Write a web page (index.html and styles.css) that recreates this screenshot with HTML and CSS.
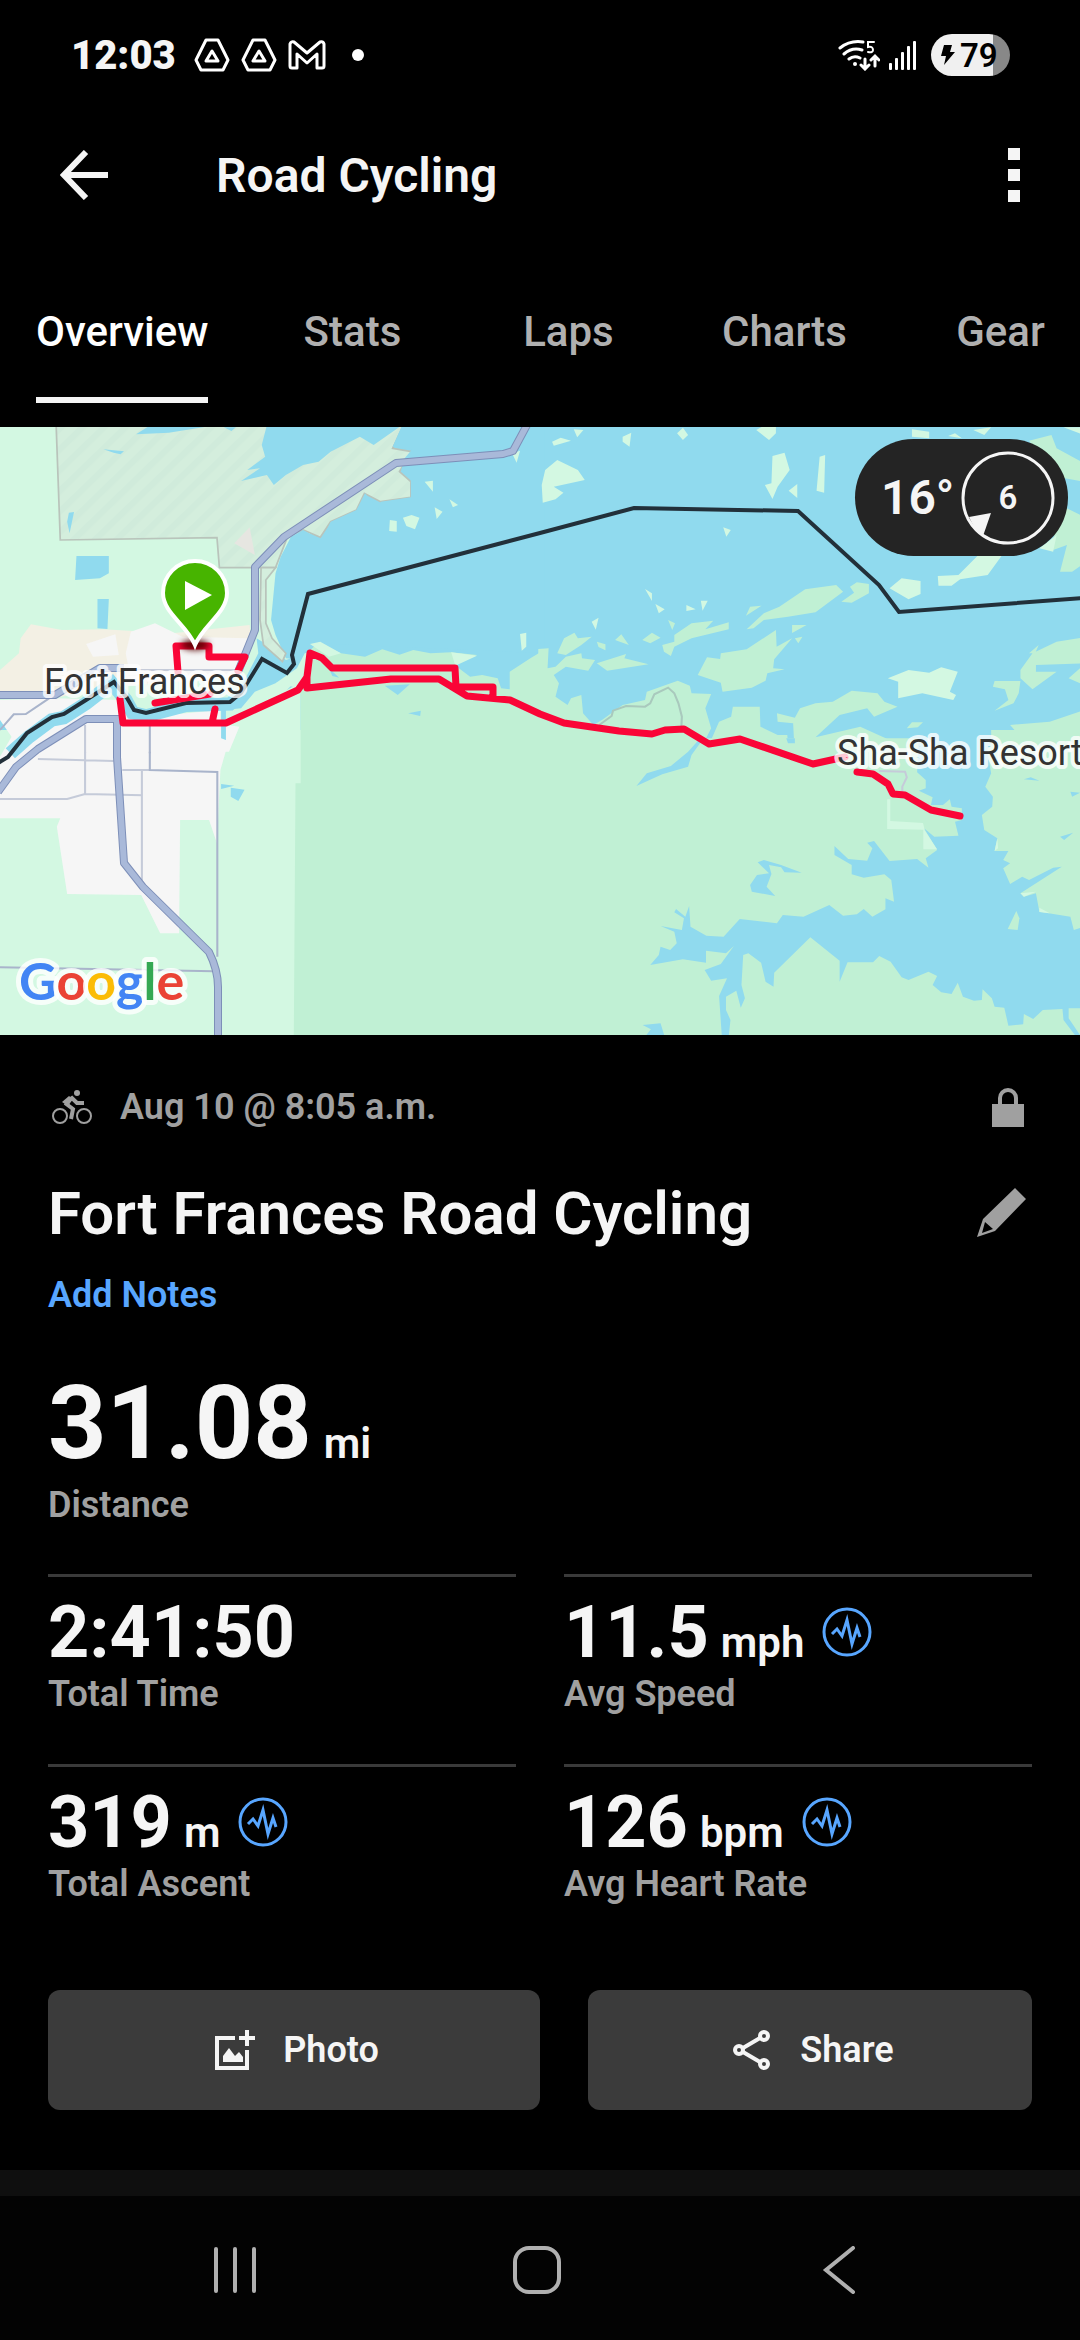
FILE: index.html
```
<!DOCTYPE html>
<html lang="en">

<head>
  <meta charset="utf-8">
  <meta name="viewport" content="width=device-width, initial-scale=1">
  <title>Road Cycling</title>
  <link rel="stylesheet" href="styles.css">
</head>

<body>
  <div class="status-bar">
    <div class="status-left">
      <span class="clock">12:03</span>
      <svg class="drive" width="36" height="34" viewBox="0 0 36 34" fill="none" stroke="#fff" stroke-width="3" stroke-linejoin="round">
        <path d="M12 2h12l10 20-5 10H7L2 22z" />
        <path d="M18 13l-6 10h12z" />
      </svg>
      <svg class="drive" width="36" height="34" viewBox="0 0 36 34" fill="none" stroke="#fff" stroke-width="3" stroke-linejoin="round">
        <path d="M12 2h12l10 20-5 10H7L2 22z" />
        <path d="M18 13l-6 10h12z" />
      </svg>
      <svg width="38" height="30" viewBox="0 0 38 30" fill="none" stroke="#fff" stroke-width="3" stroke-linejoin="round">
        <path d="M2 4q1-3 4-2l13 11L32 2q3-1 4 2v22q0 2-2 2h-5V14L19 23 9 14v14H4q-2 0-2-2z" />
      </svg>
      <span class="more-dot"></span>
    </div>
    <div class="status-right">
      <svg width="42" height="32" viewBox="0 0 42 32" fill="none" stroke="#fff" stroke-width="3" stroke-linecap="round">
        <path d="M2 9Q12 1 25 3M6 15q8-7 18-4M11 20q5-4 11-1" />
        <circle cx="17" cy="25" r="2" fill="#fff" stroke="none" />
        <path d="M36 3h-6v5q5-1 5 3 0 3-5 2" stroke-width="2" />
        <path d="M27 20v9M23 26l4 4 4-4M37 27v-9M33 21l4-4 4 4" stroke-width="3" />
      </svg>
      <svg width="28" height="30" viewBox="0 0 28 30" fill="#fff">
        <rect x="0" y="23" width="3" height="7" rx="1" />
        <rect x="6" y="18" width="3" height="12" rx="1" />
        <rect x="12" y="12" width="3" height="18" rx="1" />
        <rect x="18" y="6" width="3" height="24" rx="1" />
        <rect x="24" y="1" width="3" height="29" rx="1" />
      </svg>
      <span class="battery">
        <svg width="14" height="22" viewBox="0 0 14 22"><path d="M3 1h8L9 8h5L3 21l2-9H0z" /></svg>
        79
      </span>
    </div>
  </div>

  <header class="app-bar">
    <button class="icon-button" aria-label="Back">
      <svg width="48" height="50" viewBox="0 0 48 50" fill="none" stroke="#f5f5f5" stroke-width="6">
        <path d="M48 25H5M26 2L4 25l22 23" />
      </svg>
    </button>
    <h1>Road Cycling</h1>
    <button class="icon-button" aria-label="More options">
      <svg width="12" height="54" viewBox="0 0 12 54" fill="#f5f5f5">
        <rect width="12" height="12" />
        <rect y="21" width="12" height="12" />
        <rect y="42" width="12" height="12" />
      </svg>
    </button>
  </header>

  <nav class="tabs">
    <a class="tab active" href="#overview">Overview</a>
    <a class="tab" href="#stats">Stats</a>
    <a class="tab" href="#laps">Laps</a>
    <a class="tab" href="#charts">Charts</a>
    <a class="tab" href="#gear">Gear</a>
  </nav>

  <main>
    <div class="map">
      <svg class="map-canvas" viewBox="0 0 1080 608">
        <defs>
          <pattern id="hatch" width="44" height="44" patternUnits="userSpaceOnUse" patternTransform="rotate(45)">
            <rect width="44" height="44" fill="#d4eedd" />
            <rect width="18" height="44" fill="#d0ebdb" />
          </pattern>
          <filter id="soft" x="-50%" y="-100%" width="200%" height="300%">
            <feGaussianBlur stdDeviation="3" />
          </filter>
        </defs>
        <rect class="water" width="1080" height="608" />

        <!-- south west -->
        <g transform="translate(0 313) scale(.3444 .3333)">
          <path class="land" d="M0-30H900V900H0z" />
          <path class="park" d="M873-30H1580V900H853L858 130H873z" />
          <path class="town" d="M0-30H680L665 0 640 90 630 310 607 240H523L520 580H465L410 465 195 462 165 260 175 235H0z" />
          <path class="land" d="M0-30H45L0 50z" />
          <path class="water" d="M642 132l38 5-38 10zM670 143l40 6-18 34-22-13zM640-30h25L668 4 642 0z" />
          <g class="street">
            <path d="M110 57L330 63M247-30V162L415 166M0 177H195L247 162M355 90H435M412 90V420" />
            <path class="street-dark" d="M435-30V90L631 96V650M0 682L620 694" />
          </g>
        </g>

        <!-- north west -->
        <g transform="translate(0 -7) scale(.3444 .3333)">
          <path class="land" d="M0 20H900V740L660 990 0 860z" />
          <path class="reserve" d="M163 15L175 360 630 353 637 443H800L835 350 880 330 930 352 960 305 1035 270 1058 220 1105 245 1193 232V185L1160 155 1195 95 1140 85 1172 15z" />
          <path class="water" d="M775 15L760 75 770 110 718 150 755 145 700 183 775 165 795 195 830 165 880 135 925 125 960 95 1045 50 1085 75 1168 15z" />
          <path class="water" d="M1168 15L1140 80 1195 90 1175 115 1165 150 1193 180V232L1105 245 1098 270 1060 220 1035 270 960 305 935 360 880 330 845 350 815 410 800 460 787 600 800 645 830 715 880 720 925 670 1580 700V15z" />
          <path class="water" d="M745 655L800 690 830 720 890 700 870 760 800 790 740 815 700 865 650 870 680 830 715 770 750 700z" />
          <path class="land" d="M862 745L885 700 915 690 910 820 873 820 873 990 660 990 700 915 740 860 850 800 800 790z" />
          <path class="park" d="M873 990V815L890 700 925 668 990 700 1060 710 1110 688 1160 704 1200 690 1250 700 1310 697 1385 705 1320 735 1365 770 1400 765 1445 775 1455 805 1480 808 1480 755 1540 715 1580 690V990z" />
          <path class="land" d="M900 672L930 665 990 700 955 710zM1310 697L1385 707 1322 737z" />
          <path class="sand" d="M90 613L180 630 300 628 500 640 725 615 730 690 600 780 300 800 160 835 0 835V750L55 700 60 655zM120 840L250 840 60 960z" />
          <path class="town" d="M250 672L335 643 345 705 270 710zM380 635L450 610 530 650 720 655 700 770 380 780 365 700zM0 840L160 835 350 840 430 890 640 870 640 912 695 920 665 995H15L40 960 0 900z" />
          <path class="water" d="M222 408H316V460L290 475 218 480zM283 537H316L312 627 283 625zM200 278L215 276 202 340 195 305zM300 88L360 94 350 103 330 98zM395 43L430 20H600L490 38zM650 22H685L672 33zM1117 797L1190 793 1155 825zM1185 880L1222 872 1220 888zM642 870H656V960L642 955zM955 745L985 773 965 768z" />
          <path fill="#e6e6e1" d="M680 370L725 322 740 405z" />
          <path class="reserve" d="M800 443L772 480V610L790 655 830 700 820 725 765 675 755 600 758 443z" />
          <path class="land" d="M1233 185l24-3v33zM1305 238l25 17-15 7zM1262 262l23 13-17 22zM1170 293l25-8 23 8-13 35-25-10zM1132 300l20 3v32l-22-2zM1487 100l23-8-10 36zM1510 642l18-4v42l-13 12z" />
          <path class="river" d="M700 825L668 852 540 856 425 888 385 878 365 840 325 790 250 850 185 893 150 900 85 950 30 1000" />
          <g class="street">
            <path d="M380 750H690M247 915V1000" />
            <path class="street-dark" d="M0 930L40 883 75 882 150 830M435 915V1000" />
          </g>
        </g>

        <!-- north east -->
        <g transform="translate(540 -7) scale(.3444 .3333)">
          <path class="park" d="M-5 687L25 685 22 745 45 740 75 710 120 700 122 715 160 720 140 752 75 740 40 765 55 790 45 830 80 855 90 835 120 825 125 880 155 915 180 900 240 855 305 840 310 815 400 782 435 797 440 820 497 822 480 865 497 925 460 1000H-5z" />
          <path class="park" d="M480 1000L520 905 555 890 560 860H638L640 920 690 945H718L720 968 738 970 735 910 690 905 688 880 740 893 755 865 800 850 850 845 905 812 980 820 1000 845 1038 860 970 890 950 865 870 885 800 952 930 920 1100 1000z" />
          <path class="park" d="M1290 1000L1320 962 1395 950 1365 915 1480 905 1580 870V1000zM1065 925l15-18h32l-15 15zM50 700L70 655 100 638 110 655 150 650 120 675 75 705zM165 730L250 702 245 715 315 733 195 752zM165 665l25 8v18l-20-10zM218 660l18-17 22 32zM297 660l28-22 25 15-30 17zM355 675L390 665 390 645 440 610 503 602 480 628 548 607V628L440 655 390 680 380 708 360 695zM372 600l20 10-8 20zM600 628L650 580 695 560 770 508 860 495 880 515 800 577 720 590 650 600 620 625z" />
          <path class="park" d="M458 765L485 712 523 717 525 700 600 688 685 630 687 680 732 655 680 718 677 745 710 748 660 760 655 782 615 803 530 815 525 788zM875 545L912 518 900 500 920 487 955 492V520L905 548zM598 587L610 560 643 557zM732 615h42l-42 24zM740 655l22-5-12 20zM1395 750L1430 700 1500 665 1580 652V730L1440 735V755H1500L1430 808 1395 775zM1320 783H1395L1390 820 1375 850 1320 872 1360 840 1350 808 1315 800zM1535 775L1568 745V790zM1420 700l28-25-10 24zM1420 62L1485 45 1500 85 1580 130V185L1500 170zM1500 250L1580 290V430L1545 455H1510L1530 375 1490 390z" />
          <path class="land" d="M5 195L15 150 50 120 110 150 130 180 40 200 68 218 45 238 8 248zM35 65L60 53 90 62 40 77zM98 28l28 2-18 22zM240 50l25-12-5 42-20-15zM398 40l17-17 15 22-15 15zM628 30L645 20H685L685 40 665 60zM675 108L710 98 725 150 690 200 675 237 653 195 672 190zM722 212l25-20v42zM812 110L828 105 825 218 803 212zM532 322l22 8-13 20zM305 507L325 520V543zM335 552L362 568 345 580zM425 555L452 568 425 573zM467 542H487L472 572zM150 605l20-12-8 36zM1015 505L1050 475 1105 483V522L1070 538zM1155 468L1215 465 1270 408H1340L1300 465 1220 478 1195 497H1157zM1010 775L1070 750 1130 758 1165 742 1213 755 1190 815 1208 825 1200 840 1110 820 1040 835V785zM1080 28L1130 35 1130 55 1080 50zM1258 30L1310 22 1290 45zM1185 48l20-8 20 15zM1520 22H1580V45zM1450 385L1500 345 1490 395z" />
          <path class="street trail" d="M172 915L208 888 212 872 250 858 305 860 320 850 332 823 372 803 390 820 402 850 412 890 410 930" />
        </g>

        <!-- south east -->
        <g transform="translate(540 313) scale(.3444 .3333)">
          <path class="park" d="M-2 30H1580V900H-2z" />
          <path class="park" d="M-2-5H1100V40H-2zM1310-30H1580V40H1310z" />
          <path class="water" d="M475-5L440 45 430 80 355 103 280 138 310 100 380 78 430 35 465-5zM1100-20L1095 97 1120 120V145L1100 152 1140 172 1135 195H1170L1190 178 1195 200 1225 205V240L1205 245 1215 287 1145 290 1115 265 1153 330 1120 355 1128 383 1095 357 1015 363 970 303 950 308 965 325 950 362 895 357 855 318V345L905 375V403L940 413 1000 403 1020 420 1028 485 1003 475V508L965 530 940 507 920 523 880 527 840 495 765 530 705 525 688 550 580 537 533 590 483 587 437 560 433 498 422 530 395 507 390 517 418 535 412 570 350 558 390 575 397 610 378 630 350 620 345 645 320 675 415 658 482 668V632L540 640 563 618 525 672 478 690 497 722 543 715 520 768 528 890H548L553 840 540 810V770L570 752 583 803 595 775 585 735 590 645 605 640 642 668 655 725 678 740 680 698 785 592 870 662V725L893 667H967L985 648 1018 665 1050 712 1070 720 1128 695 1153 708 1140 735 1165 757 1195 762 1213 728 1228 770 1260 782 1283 780 1285 748 1312 775 1320 800 1348 803 1360 857 1403 853 1405 822 1432 837 1460 810 1517 807 1520 840 1553 885H1568L1535 835V805H1580V560L1550 570 1540 530 1450 515 1440 460 1405 470 1395 460 1515 380 1490 383 1420 420 1400 410 1365 432 1345 385 1365 370 1345 360 1360 333H1320L1328 295 1290 270 1283 225 1313 200 1315 170 1293 140 1310 100 1290-20z" />
          <path class="water" d="M632 367L650 360 700 375 760 398 710 397 700 382 665 375 672 402 658 440 683 468 615 455 610 435 630 405 665 400zM298 855L350 850 362 890H305L322 868zM1405 118L1425 112 1450 122zM1540 155L1568 158 1545 170zM1510 290L1548 278 1522 300zM715-5h25v15h-20z" />
          <path class="park" d="M1358 567L1383 513 1392 535 1387 570z" />
          <path class="land" d="M1008 178h9v65l95 6 5 20-109-2zM1113 265L1153 328H1113zM1395 460L1440 455 1405 470zM1450 503L1480 520 1450 516zM1328 295L1330 325 1320 333z" />
          <path class="street" d="M985 93L1060 95 1065 112 1052 140V160" />
        </g>

        <!-- highways, drawn twice for the outline -->
        <g class="highway-edge">
          <path d="M527-2L513 24 503 27 396 36 284 110 255 140V203L238 245M0 268H55L100 241H124M-2 365L16 340 38 322 86 292H120M117 292V330L124 436 143 460 209 525Q218 543 218 560V610" />
        </g>
        <g class="highway">
          <path d="M527-2L513 24 503 27 396 36 284 110 255 140V203L238 245M0 268H55L100 241H124M-2 365L16 340 38 322 86 292H120M117 292V330L124 436 143 460 209 525Q218 543 218 560V610" />
        </g>

        <path class="border" d="M-2 336L8 330 27 306 52 290 64 287 86 273 114 255 127 271 134 283 146 286 186 276 230 275 241 266 262 232 287 246 294 237 292 228 308 167 540 106 634 81 798 84 879 158 899 185 1082 171" />

        <g class="route">
          <path d="M178 245L176 219H209V230H245L238 244M155 276L210 267M120 272L123 296H226L298 263 307 250 310 226 322 231 332 241H455L456 260H493V271M307 250V261L391 252H439L467 269 510 273 540 287 564 296 619 304 652 307 665 303 684 302 709 317 740 312 813 337 845 330M857 345L873 347 888 357 893 367 905 368 931 383 960 389M212 296L215 282" />
        </g>

        <ellipse cx="195" cy="218" rx="14" ry="5" fill="#500" filter="url(#soft)" />
        <path d="M195 218C187 198 163 186 163 166a32 32 0 0 1 64 0C227 186 203 198 195 218z" fill="#47b400" stroke="#fff" stroke-width="4" />
        <path d="M185 154v29l27-15z" fill="#fff" />

        <text class="place" x="44" y="267">Fort Frances</text>
        <text class="place" x="837" y="338">Sha-Sha Resort</text>
        <text class="logo" x="19" y="573"><tspan fill="#4285f4">G</tspan><tspan fill="#ea4335">o</tspan><tspan fill="#fbbc05">o</tspan><tspan fill="#4285f4">g</tspan><tspan fill="#34a853">l</tspan><tspan fill="#ea4335">e</tspan></text>
      </svg>

      <div class="weather">
        <span class="temp">16°</span>
        <span class="wind">
          <svg class="wind-ring" width="96" height="96" viewBox="0 0 96 96">
            <circle cx="48" cy="48" r="45" fill="none" stroke="#f5f5f5" stroke-width="3" />
            <path d="M9 67l22-4-8 23q-9-7-14-19z" fill="#f5f5f5" />
          </svg>
          6
        </span>
      </div>
    </div>

    <section class="summary">
      <div class="row meta">
        <svg width="42" height="38" viewBox="0 0 42 38" fill="none" stroke="#a0a0a0" stroke-width="2">
          <circle cx="9" cy="28" r="7" />
          <circle cx="33" cy="28" r="7" />
          <circle cx="26" cy="5" r="3" fill="#a0a0a0" stroke="none" />
          <path d="M14 15l7-5 5 5h7M14 15l8 6-2 10" stroke-width="4" />
          <path d="M11 14l7-6 4 3-5 7z" fill="#a0a0a0" stroke="none" />
        </svg>
        <span class="date">Aug 10 @ 8:05 a.m.</span>
        <svg class="end" width="32" height="40" viewBox="0 0 32 40">
          <rect y="17" width="32" height="23" fill="#a0a0a0" />
          <path d="M8 18V11a8 8 0 0 1 16 0v7" fill="none" stroke="#a0a0a0" stroke-width="4" />
        </svg>
      </div>
      <div class="row title-row">
        <h2>Fort Frances Road Cycling</h2>
        <button class="icon-button end" aria-label="Edit name">
          <svg width="50" height="50" viewBox="0 0 50 50" fill="#a0a0a0">
            <path fill-rule="evenodd" d="M38 0L49 11 18 43 0 49 6 31zM8 34L5 45 16 41z" />
          </svg>
        </button>
      </div>
      <a class="notes" href="#notes">Add Notes</a>

      <div class="distance">
        <div class="figure"><span class="value">31.08</span><span class="unit">mi</span></div>
        <div class="label">Distance</div>
      </div>

      <div class="stats">
        <div class="stat">
          <div class="figure"><span class="value">2:41:50</span></div>
          <div class="label">Total Time</div>
        </div>
        <div class="stat">
          <div class="figure">
            <span class="value">11.5</span><span class="unit">mph</span>
            <svg class="pulse" viewBox="0 0 50 50"><circle cx="25" cy="25" r="23" /><path d="M10 27l5-5 5 7 5-16 5 24 5-16 3 9" /></svg>
          </div>
          <div class="label">Avg Speed</div>
        </div>
        <div class="stat">
          <div class="figure">
            <span class="value">319</span><span class="unit">m</span>
            <svg class="pulse" viewBox="0 0 50 50"><circle cx="25" cy="25" r="23" /><path d="M10 27l5-5 5 7 5-16 5 24 5-16 3 9" /></svg>
          </div>
          <div class="label">Total Ascent</div>
        </div>
        <div class="stat">
          <div class="figure">
            <span class="value">126</span><span class="unit">bpm</span>
            <svg class="pulse" viewBox="0 0 50 50"><circle cx="25" cy="25" r="23" /><path d="M10 27l5-5 5 7 5-16 5 24 5-16 3 9" /></svg>
          </div>
          <div class="label">Avg Heart Rate</div>
        </div>
      </div>

      <div class="actions">
        <button class="action">
          <svg width="40" height="40" viewBox="0 0 40 40" fill="none" stroke="#f5f5f5" stroke-width="4">
            <path d="M20 8H2v30h30V20M32 0v16M24 8h16" />
            <path d="M8 32V26l6-8 6 8 4-4 4 5v5z" fill="#f5f5f5" stroke="none" />
          </svg>
          Photo
        </button>
        <button class="action">
          <svg width="40" height="40" viewBox="0 0 40 40" fill="none" stroke="#f5f5f5" stroke-width="4">
            <path d="M11 18L28 8M11 22l17 10" />
            <circle cx="7" cy="20" r="4" />
            <circle cx="32" cy="6" r="4" />
            <circle cx="32" cy="34" r="4" />
          </svg>
          Share
        </button>
      </div>
    </section>
    <div class="separator"></div>
  </main>

  <footer class="nav-bar">
    <button class="icon-button" aria-label="Recent apps">
      <svg width="48" height="48" viewBox="0 0 48 48" stroke="#b0b0b0" stroke-width="4" stroke-linecap="round">
        <path d="M5 3v42M24 3v42M43 3v42" />
      </svg>
    </button>
    <button class="icon-button" aria-label="Home">
      <svg width="48" height="48" viewBox="0 0 48 48" fill="none" stroke="#b0b0b0" stroke-width="4">
        <rect x="2" y="2" width="44" height="44" rx="14" />
      </svg>
    </button>
    <button class="icon-button" aria-label="Back">
      <svg width="48" height="48" viewBox="0 0 48 48" fill="none" stroke="#b0b0b0" stroke-width="4" stroke-linecap="round">
        <path d="M38 2L11 24l27 22" />
      </svg>
    </button>
  </footer>
</body>

</html>
```
FILE: styles.css
```
* {
  box-sizing: border-box;
}

body {
  margin: 0;
  min-height: 100vh;
  display: flex;
  flex-direction: column;
  background-color: #000;
  color: #f5f5f5;
  font-family: Roboto, "Liberation Sans", sans-serif;
  overflow-x: hidden;
}

h1,
h2 {
  margin: 0;
}

svg {
  display: block;
  flex: none;
}

a {
  text-decoration: none;
}

button {
  font-family: inherit;
  color: inherit;
  border: none;
  cursor: pointer;
}

.icon-button {
  background: none;
  padding: 0;
}

/* status bar */
.status-bar {
  display: flex;
  justify-content: space-between;
  align-items: center;
  height: 110px;
  padding: 0 70px 0 71px;
}

.status-left,
.status-right {
  display: flex;
  align-items: center;
}

.clock {
  font-size: 40px;
  font-weight: 900;
  margin-right: 18px;
}

.drive {
  margin-right: 11px;
}

.more-dot {
  width: 12px;
  height: 12px;
  margin-left: 26px;
  border-radius: 50%;
  background-color: #fff;
}

.status-right {
  gap: 9px;
}

.battery {
  display: flex;
  align-items: center;
  gap: 5px;
  width: 79px;
  height: 42px;
  margin-left: 5px;
  padding-left: 10px;
  border-radius: 21px;
  background: linear-gradient(to right, #f0f0f0 78%, #888 78%);
  color: #000;
  font-size: 33px;
  font-weight: 600;
}

/* app bar */
.app-bar {
  display: flex;
  align-items: center;
  height: 130px;
  padding: 0 60px;
}

.app-bar h1 {
  flex: 1;
  margin-left: 108px;
  font-size: 48px;
  font-weight: 600;
}

/* tabs */
.tabs {
  display: flex;
  height: 187px;
  padding: 53px 0 24px;
}

.tab {
  flex: none;
  min-width: 216px;
  padding: 11px 0 14px;
  text-align: center;
  color: #b0b0b0;
  font-size: 42px;
  line-height: 56px;
  font-weight: 500;
}

.tab.active {
  min-width: 0;
  margin: 0 36px;
  color: #fff;
  border-bottom: 6px solid #f5f5f5;
}

/* map */
.map {
  position: relative;
  overflow: hidden;
}

.map-canvas {
  width: 100%;
  height: auto;
}

.water { fill: #90daee; }
.land { fill: #d3f8e2; }
.park { fill: #c0f0d4; }
.town { fill: #f6f6f6; }
.sand { fill: #f3f0e4; }

.reserve {
  fill: url(#hatch);
  stroke: #b9c4bb;
  stroke-width: 5;
}

.river {
  fill: none;
  stroke: #90daee;
  stroke-width: 40;
}

.street {
  fill: none;
  stroke: #c5cbd9;
  stroke-width: 6;
}

.street-dark {
  stroke: #a9b4cb;
}

.trail {
  stroke: #a9c9bd;
}

.highway,
.highway-edge {
  fill: none;
  stroke: #a9b9d9;
  stroke-width: 6;
  stroke-linejoin: round;
}

.highway-edge {
  stroke: #7d8fb8;
  stroke-width: 8;
}

.border {
  fill: none;
  stroke: #22303a;
  stroke-width: 4;
}

.route {
  fill: none;
  stroke: #fa0537;
  stroke-width: 7;
  stroke-linejoin: round;
  stroke-linecap: round;
}

.place,
.logo {
  paint-order: stroke;
  stroke: rgba(255, 255, 255, 0.8);
  stroke-linejoin: round;
}

.place {
  font-size: 36px;
  fill: #333;
  stroke-width: 8px;
}

.logo {
  font-family: Lato, sans-serif;
  font-size: 52px;
  font-weight: 700;
  stroke-width: 10px;
}

.weather {
  position: absolute;
  top: 12px;
  right: 12px;
  display: flex;
  align-items: center;
  justify-content: space-between;
  height: 117px;
  width: 213px;
  padding: 0 12px 0 26px;
  border-radius: 60px;
  background-color: #242424;
}

.temp {
  font-size: 48px;
  font-weight: 600;
}

.wind {
  position: relative;
  display: flex;
  align-items: center;
  justify-content: center;
  width: 96px;
  height: 96px;
  font-size: 33px;
  font-weight: 600;
}

.wind-ring {
  position: absolute;
  inset: 0;
}

/* activity summary */
.summary {
  padding: 48px 48px 60px;
}

.row {
  display: flex;
  align-items: center;
}

.end {
  margin-left: auto;
}

.meta {
  height: 48px;
  padding: 0 8px 0 3px;
}

.date {
  margin-left: 27px;
}

.date,
.notes,
.label {
  font-size: 36px;
  line-height: 48px;
  font-weight: 600;
  color: #a0a0a0;
}

.title-row {
  height: 84px;
  margin-top: 40px;
  padding-right: 5px;
}

.title-row h2 {
  font-size: 60px;
  font-weight: 600;
}

.notes {
  display: block;
  margin-top: 16px;
  color: #58a6ff;
}

.figure {
  display: flex;
  align-items: baseline;
  line-height: 74px;
}

.value {
  font-size: 72px;
  font-weight: 700;
}

.unit {
  margin-left: 12px;
  font-size: 42px;
  line-height: 42px;
  font-weight: 600;
}

.distance {
  margin-top: 50px;
  padding-bottom: 45px;
}

.distance .figure {
  line-height: 108px;
  margin-bottom: 4px;
}

.distance .value {
  font-size: 102px;
}

.distance .unit {
  line-height: 42px;
}

.stats {
  display: grid;
  grid-template-columns: 1fr 1fr;
  column-gap: 48px;
}

.stat {
  height: 190px;
  padding-top: 19px;
  border-top: 3px solid #3a3a3a;
}

.pulse {
  width: 50px;
  height: 50px;
  margin-left: 18px;
  fill: none;
  stroke: #58a6ff;
  stroke-width: 3;
}

.actions {
  display: grid;
  grid-template-columns: 41fr 37fr;
  gap: 48px;
  margin-top: 36px;
}

.action {
  display: flex;
  align-items: center;
  justify-content: center;
  gap: 28px;
  height: 120px;
  padding: 0 0 0 6px;
  border-radius: 12px;
  background-color: #3b3b3b;
  font-size: 36px;
  font-weight: 600;
}

.separator {
  height: 26px;
  background-color: #0f0f0f;
}

/* system navigation */
.nav-bar {
  display: flex;
  justify-content: space-around;
  align-items: center;
  height: 144px;
  margin-top: auto;
  padding: 4px 90px 0 84px;
  background-color: #030303;
}
```
